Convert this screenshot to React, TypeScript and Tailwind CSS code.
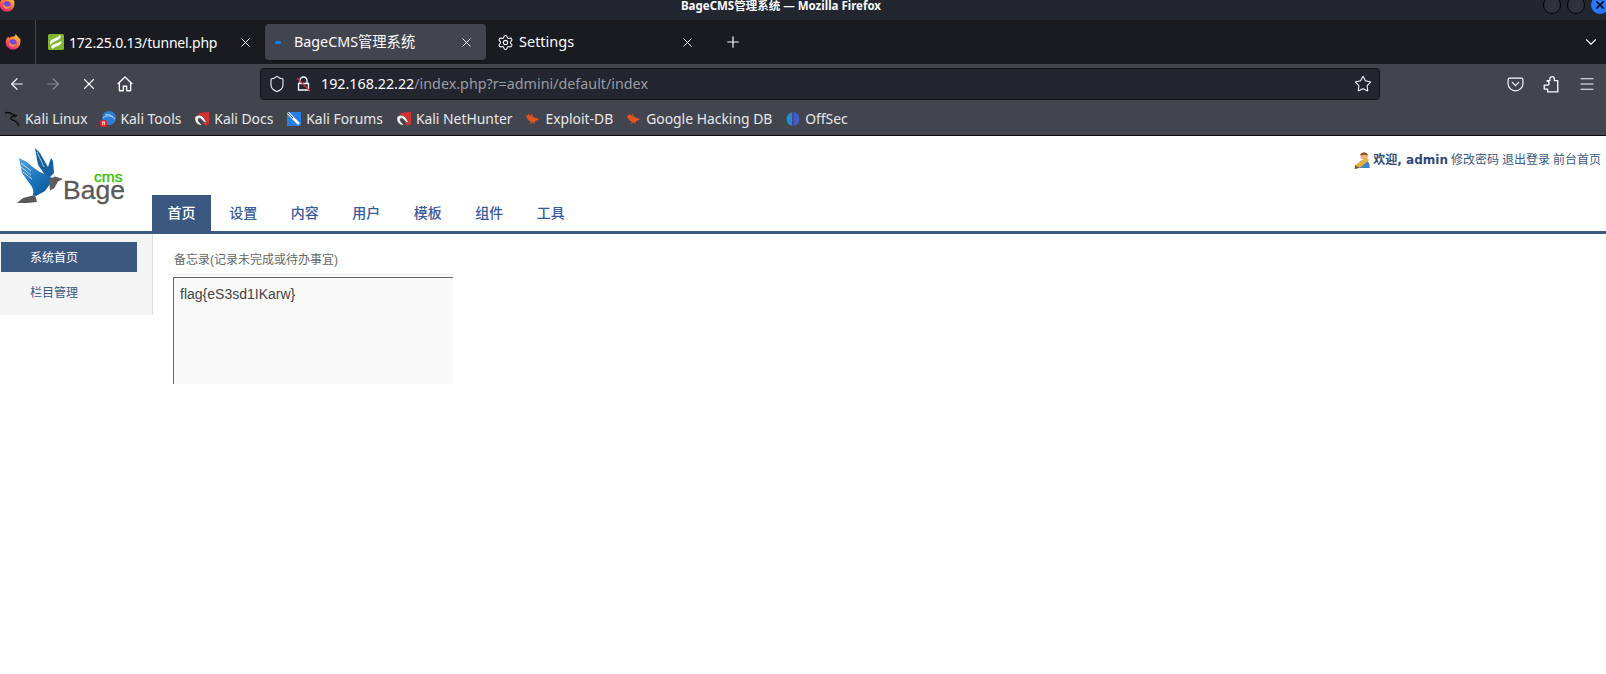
import React from 'react';
import { ArrowLeft, ArrowRight, ChevronDown, Menu, Plus, Settings, Shield, Star, X } from 'lucide-react';

const uiFont = "font-['Noto_Sans','Noto_Sans_CJK_SC',sans-serif]";
const pageFont = "font-['Liberation_Sans','Noto_Sans_CJK_SC',sans-serif]";

const FirefoxIcon: React.FC<{ size: number }> = ({ size }) => (
  <svg width={size} height={size} viewBox="0 0 16 16" className="shrink-0">
    <defs>
      <linearGradient id="ff" x1="0.8" y1="0" x2="0.2" y2="1">
        <stop offset="0" stopColor="#ffd43a" />
        <stop offset="0.5" stopColor="#ff7139" />
        <stop offset="1" stopColor="#e31587" />
      </linearGradient>
    </defs>
    <path d="M15.4 5.6c-.3-.9-1-1.900-1.600-2.300.4.800.7 1.500.7 2-.9-2.400-2.600-3.300-3.900-5.300-.1 1.300-1 2.300-1.600 2.800C6.500 2.200 5.300 3 4.800 4.300 4 3.900 3.600 3.200 3.500 2.600 2.700 3.300.6 5.200.6 8.300a7.400 7.400 0 0 0 14.800.1c0-1-.1-1.900 0-2.800z" fill="url(#ff)" />
    <circle cx="8" cy="9" r="3.700" fill="#7542e5" />
    <path d="M4.200 8.300c1 .2 2.400 2.700 4.300 2.500 1.600-.2 2.600-1.300 2.800-2.600.4 2.400-1.300 4.600-3.500 4.600-2.400 0-4.300-2-3.600-4.500z" fill="#ff9640" />
  </svg>
);

const TunnelIcon: React.FC = () => (
  <svg width="16" height="16" viewBox="0 0 16 16" className="shrink-0">
    <rect width="16" height="16" rx="1.500" fill="#7db52f" />
    <path d="M2 8c2-4 6-3 10-7l1 2c-2 4-7 3-11 8zM3 13c2-4 6-3 10-6l.5 2c-2 3-6 3-9 6z" fill="#fff" />
  </svg>
);

const KaliIcon: React.FC = () => (
  <svg width="16" height="16" viewBox="0 0 16 16" className="shrink-0" fill="none" stroke="#0a0a0a" strokeWidth="1.300">
    <path d="M0 2c3-1 6 0 7.500 1.500 1 1 2 1 2.500 2-2-.5-4.500 0-4.500 2 0 1.500 2.500 1.500 4.500 2.500 2 1 3 2.500 4 5" />
    <path d="M8 3.500c1.500.5 3 .5 4 1.500" />
  </svg>
);

const ToolsIcon: React.FC = () => (
  <svg width="16" height="16" viewBox="0 0 16 16" className="shrink-0">
    <circle cx="9" cy="7" r="7" fill="#2f7fd6" />
    <path d="M3 7c3-3 8-3 12 1M5 4c3-1 6 0 8 2" stroke="#a9d3f5" strokeWidth="1" fill="none" />
    <rect x="0" y="9" width="7" height="7" rx="2" fill="#e0262b" />
    <path d="M2 11h3M2.700 11v3M4.300 11v3" stroke="#fff" strokeWidth="0.800" />
  </svg>
);

const DocsIcon: React.FC = () => (
  <svg width="16" height="16" viewBox="0 0 16 16" className="shrink-0">
    <path d="M4 2L15 1v12l-4 2z" fill="#d8302f" />
    <path d="M1 6c3-3 7-2 9 1l3 5-3-1-3-3C5 6 3 8 5 11l3 3C4 15 0 11 1 6z" fill="#f2f2f2" stroke="#333" strokeWidth="0.500" />
  </svg>
);

const ForumsIcon: React.FC = () => (
  <svg width="16" height="16" viewBox="0 0 16 16" className="shrink-0">
    <path d="M2 1h13v12a2 2 0 0 1-2 2H1V2z" fill="#2a7de1" />
    <path d="M2 2l11 11" stroke="#fff" strokeWidth="2.500" />
    <path d="M2 2l5 5" stroke="#444" strokeWidth="1" />
  </svg>
);

const ExploitIcon: React.FC = () => (
  <svg width="16" height="16" viewBox="0 0 16 16" className="shrink-0">
    <path d="M1 5c2-2 5-1 7 1l6 2c-1 1-2 1.500-3 1.500-1 2-3 2.500-5 1.500C4 10 2 8 1 5z" fill="#e2561c" />
    <path d="M3 3l3 3M6 2.500L8 6M5 13l2-2.500M9 13l0-3" stroke="#e2561c" strokeWidth="0.900" />
  </svg>
);

const OffSecIcon: React.FC = () => (
  <svg width="16" height="16" viewBox="0 0 16 16" className="shrink-0">
    <path d="M7 1.200A7 7 0 0 0 7 14.800z" fill="#1f8fc9" />
    <path d="M9 1.200a7 7 0 0 1 0 13.600z" fill="#3b5fc4" />
    <path d="M7.500 1h1v14h-1z" fill="#6a3fd0" />
  </svg>
);

const BirdLogo: React.FC = () => (
  <svg width="112" height="62" viewBox="0 0 112 62" className="block">
    <defs>
      <linearGradient id="wing" x1="0" y1="0" x2="0.7" y2="1">
        <stop offset="0" stopColor="#5aa6dc" />
        <stop offset="0.55" stopColor="#1f78bd" />
        <stop offset="1" stopColor="#0d5a9e" />
      </linearGradient>
    </defs>
    {/* back wing */}
    <path d="M20 3l5 5 5 9 3 5 3-9 2 3 1 12-6 6-10-14z" fill="#17609f" />
    <path d="M22 7l7 15M19 12l7 15" stroke="#fff" strokeWidth="0.800" opacity="0.8" />
    {/* front wing and body */}
    <path d="M4 13l8 4 7 6 6 4 7 3 5 3-2 6-5 7-9 5-3-1c1-4 0-7-3-11L7 28z" fill="url(#wing)" />
    <path d="M6 18l10 8M6 22l10 8M8 27l9 7" stroke="#fff" strokeWidth="0.800" opacity="0.85" />
    {/* tail */}
    <path d="M2 58l6-5 12-3 2 7-10 1z" fill="#585858" />
    {/* head */}
    <path d="M34 34l6-2.500 8 2.500-5 2.500-4 7-4 2z" fill="#5c5c5c" />
    <text x="48" y="54" fontFamily="'Liberation Sans',sans-serif" fontSize="26.500" fill="#5a5a5a" stroke="#5a5a5a" strokeWidth="0.300">Bage</text>
    <text x="79" y="37" fontFamily="'Liberation Sans',sans-serif" fontSize="15.500" fill="#3cc00a" stroke="#3cc00a" strokeWidth="0.400">cms</text>
  </svg>
);

const AdminIcon: React.FC = () => (
  <svg width="18" height="18" viewBox="0 0 16 16" className="shrink-0">
    <circle cx="9" cy="4.500" r="3.300" fill="#e9b27c" />
    <path d="M5.500 4C6 .5 12 .5 12.500 4 10 3 8 3 5.500 4z" fill="#8a4b1f" />
    <path d="M3 15c0-5 3-7 6-7s5 2 5 7z" fill="#3f82c9" />
    <path d="M1 12.500l10-6.500 2.500 2-8.500 7z" fill="#e8b23a" />
    <path d="M1 12.500l4 2.500-4.500 1z" fill="#7a5a22" />
  </svg>
);

const bookmarks: { icon: React.ReactNode; label: string }[] = [
  { icon: <KaliIcon />, label: 'Kali Linux' },
  { icon: <ToolsIcon />, label: 'Kali Tools' },
  { icon: <DocsIcon />, label: 'Kali Docs' },
  { icon: <ForumsIcon />, label: 'Kali Forums' },
  { icon: <DocsIcon />, label: 'Kali NetHunter' },
  { icon: <ExploitIcon />, label: 'Exploit-DB' },
  { icon: <ExploitIcon />, label: 'Google Hacking DB' },
  { icon: <OffSecIcon />, label: 'OffSec' },
];

const navItems = ['设置', '内容', '用户', '模板', '组件', '工具'];

const BrowserChrome: React.FC = () => (
  <div className={`${uiFont} text-[#fbfbfe]`}>
    {/* window title */}
    <div className="h-5 bg-[#22262f] flex items-start overflow-hidden relative">
      <div className="-mt-[4px] ml-[-1px]">
        <FirefoxIcon size={16} />
      </div>
      <div className="flex-1 text-center text-[11.500px] font-bold leading-[11px] pl-[4px] whitespace-nowrap">
        BageCMS管理系统 — Mozilla Firefox
      </div>
      <div className="flex gap-[6px] -mt-[4px] mr-[-3px]">
        <div className="w-[18px] h-[18px] rounded-full bg-[#2e323c] border border-black" />
        <div className="w-[18px] h-[18px] rounded-full bg-[#2e323c] border border-black" />
        <div className="w-[18px] h-[18px] rounded-full bg-[#2777ff] flex items-center justify-center">
          <X size={12} strokeWidth={3.500} className="text-black" />
        </div>
      </div>
    </div>

    {/* tab strip */}
    <div className="h-11 bg-[#1a1b20] flex items-center text-[14.500px]">
      <div className="w-[30px] h-full flex items-center pl-[5px] border-r border-[#44464d] box-content">
        <FirefoxIcon size={16} />
      </div>
      <div className="w-[229px] flex items-center pl-[12px] pr-[12px]">
        <TunnelIcon />
        <span className="ml-[5px] flex-1 whitespace-nowrap text-[14px] tracking-[-0.2px]">172.25.0.13/tunnel.php</span>
        <X size={15} strokeWidth={1.500} />
      </div>
      <div className="w-[221px] h-9 bg-[#42454e] rounded-[4px] flex items-center pl-[10px] pr-[12px] shadow">
        <span className="w-[6px] h-[3px] rounded-full bg-[#0a84ff]" />
        <span className="ml-[13px] flex-1 whitespace-nowrap text-[14.300px]">BageCMS管理系统</span>
        <X size={15} strokeWidth={1.500} />
      </div>
      <div className="w-[221px] flex items-center pl-[11px] pr-[12px]">
        <Settings size={17} strokeWidth={1.500} />
        <span className="ml-[5px] flex-1">Settings</span>
        <X size={15} strokeWidth={1.500} />
      </div>
      <Plus size={18} strokeWidth={1.600} className="ml-[17px]" />
      <div className="flex-1" />
      <ChevronDown size={18} strokeWidth={1.500} className="mr-[6px]" />
    </div>

    {/* nav toolbar */}
    <div className="h-10 bg-[#42454e] flex items-center">
      <div className="w-[260px] flex items-center pl-[8px] gap-[18px] shrink-0">
        <ArrowLeft size={18} strokeWidth={1.500} />
        <ArrowRight size={18} strokeWidth={1.500} className="opacity-40" />
        <X size={18} strokeWidth={1.500} />
        <svg width="18" height="18" viewBox="0 0 16 16" fill="none" stroke="currentColor" strokeWidth="1.200">
          <path d="M1.500 8L8 1.800 14.500 8M3 6.800V14h3.500v-4h3v4H13V6.800" strokeLinejoin="round" />
        </svg>
      </div>
      <div className="w-[1120px] h-8 bg-[#23262f] border border-[#111] rounded-[4px] flex items-center pl-[7px] pr-[7px] text-[14.300px] shrink-0">
        <Shield size={18} strokeWidth={1.400} />
        <svg width="16" height="16" viewBox="0 0 16 16" fill="none" className="ml-[10px]">
          <path d="M4 7V4.500a3.500 3.500 0 0 1 7 0V7M2.500 7.500h10V14h-10z" stroke="#fbfbfe" strokeWidth="1.300" />
          <path d="M1 2l13 13" stroke="#e22850" strokeWidth="1.300" />
        </svg>
        <span className="ml-[9px] flex-1 whitespace-nowrap">
          192.168.22.22<span className="text-[#9a9ba3]">/index.php?r=admini/default/index</span>
        </span>
        <Star size={18} strokeWidth={1.400} />
      </div>
      <div className="flex-1 flex items-center justify-end gap-[18px] pr-[10px]">
        <svg width="17" height="17" viewBox="0 0 16 16" fill="none" stroke="currentColor" strokeWidth="1.100">
          <path d="M2.500 2h11A1.500 1.500 0 0 1 15 3.500V7A7 7 0 0 1 1 7V3.500A1.500 1.500 0 0 1 2.500 2z" />
          <path d="M5 6l3 3 3-3" strokeLinecap="round" />
        </svg>
        <svg width="18" height="18" viewBox="0 0 16 16" fill="none" stroke="currentColor" strokeWidth="1.200">
          <path d="M2 9h2.500a1.500 1.500 0 0 0 0-3.500V5H7V3.500a2 2 0 0 1 4 0V5h3v10H5v-2.500H2z" strokeLinejoin="round" />
        </svg>
        <Menu size={18} strokeWidth={1.500} />
      </div>
    </div>

    {/* bookmarks */}
    <div className="h-[32px] bg-[#42454e] border-b border-[#0c0c0d] flex items-center pl-[5px] gap-[12.900px] text-[13.900px] text-[#e8e8ec]">
      {bookmarks.map((b) => (
        <div key={b.label} className="flex items-center gap-[4px] whitespace-nowrap">
          {b.icon}
          <span>{b.label}</span>
        </div>
      ))}
    </div>
  </div>
);

const App: React.FC = () => {
  return (
    <div className="h-[674px] bg-white overflow-hidden">
      <BrowserChrome />
      <div className={pageFont}>
        <header className="h-[98px] border-b-[3px] border-[#3b5880] flex relative">
          <div className="w-[152px] shrink-0 pl-[15px] pt-[9px]">
            <BirdLogo />
          </div>
          <nav className="flex items-end self-end">
            <a className="w-[59px] h-9 bg-[#3b5880] text-white text-[14px] font-medium flex items-center justify-center pt-px">
              首页
            </a>
            <div className="flex pl-[1.500px]">
              {navItems.map((item) => (
                <a key={item} className="w-[61.500px] h-9 text-[#3a5a98] text-[14px] font-medium flex items-center justify-center pt-px">
                  {item}
                </a>
              ))}
            </div>
          </nav>
          <div className="ml-auto pr-[5px] pt-[15px] flex items-center self-start text-[12px] text-[#3b5880]">
            <AdminIcon />
            <span className="ml-[1px] font-['DejaVu_Sans','Noto_Sans_CJK_SC',sans-serif] font-bold text-[#2f4a7a]">欢迎, admin</span>
            <span className="ml-[3px]">修改密码</span>
            <span className="ml-[3px]">退出登录</span>
            <span className="ml-[3px]">前台首页</span>
          </div>
        </header>
        <div className="flex items-start">
          <aside className="w-[153px] h-[81px] bg-[#f4f4f4] border-r border-[#ddd] pl-px pt-2 shrink-0">
            <div className="w-[136px] h-[30px] bg-[#3b5880] text-white text-[12px] pl-[29px] flex items-center pt-px">系统首页</div>
            <div className="h-[30px] mt-[5px] text-[#3b5880] text-[12px] pl-[29px] flex items-center pt-px">栏目管理</div>
          </aside>
          <main className="w-[300px] pl-[15px] pt-[15px]">
            <div className="h-[26px] border-b border-[#eee] pl-[6px] text-[12px] text-[#666] leading-[23px]">
              备忘录(记录未完成或待办事宜)
            </div>
            <div className="ml-[5px] mt-[2px] h-[107px] bg-[#f9f9f9] border-l border-t border-[#666] pl-[6px] pt-[7px] text-[14px] text-[#444] leading-[18px]">
              flag{'{'}eS3sd1IKarw{'}'}
            </div>
          </main>
        </div>
      </div>
    </div>
  );
};

export default App;
